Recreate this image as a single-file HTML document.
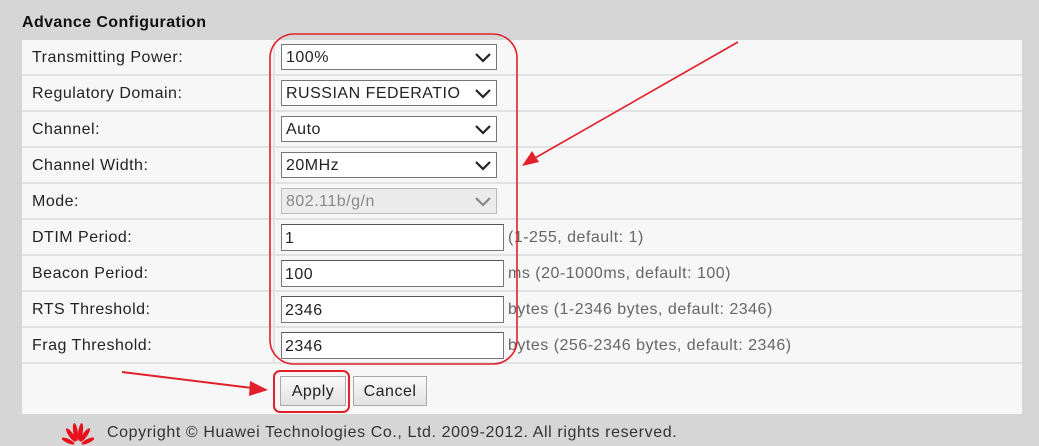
<!DOCTYPE html>
<html><head><style>
body{margin:0;width:1039px;height:446px;background:#d6d6d6;position:relative;overflow:hidden;font-family:"Liberation Sans",Arial,sans-serif;font-size:16px;letter-spacing:0.5px;color:#222}
.a{position:absolute}
.title{left:22px;top:14px;font-weight:bold;font-size:16px;letter-spacing:0.4px;color:#111}
.tbl{left:22px;top:40px;width:1000px;height:374px;background:#f7f7f7}
.row{position:absolute;left:0;width:1000px;height:34px;border-bottom:2px solid #e2e2e2}
.lab{position:absolute;left:10px;top:9px}
.sep{position:absolute;left:251px;top:0;width:2px;height:34px;background:#e2e2e2}
.sel{position:absolute;left:259px;top:4px;width:210px;height:24px;border:1px solid #777;background:#fff;line-height:26px;padding-left:4px}
.sel svg{position:absolute;right:5px;top:8px}
.dis{background:#ececec;border-color:#bbb;color:#888}
.inp{position:absolute;left:259px;top:4px;width:218px;height:25px;border:1px solid #777;border-top-color:#555;background:#fff;line-height:27px;padding-left:3px}
.hint{position:absolute;left:486px;top:9px;color:#666}
.btn{position:absolute;top:336px;height:28px;border:1px solid #aaa;background:linear-gradient(#fafafa,#e2e2e2);line-height:30px;text-align:center}
.foot{left:107px;top:424px;font-size:16px;letter-spacing:0.6px;color:#333}
</style></head><body>
<div class="a title">Advance Configuration</div>
<div class="a tbl">
 <div class="row" style="top:0"><span class="lab">Transmitting Power:</span><div class="sep"></div><div class="sel">100%<svg width="16" height="10"><path d="M1 1L8 8L15 1" stroke="#222" stroke-width="2.2" fill="none"/></svg></div></div>
 <div class="row" style="top:36px"><span class="lab">Regulatory Domain:</span><div class="sep"></div><div class="sel">RUSSIAN FEDERATIO<svg width="16" height="10"><path d="M1 1L8 8L15 1" stroke="#222" stroke-width="2.2" fill="none"/></svg></div></div>
 <div class="row" style="top:72px"><span class="lab">Channel:</span><div class="sep"></div><div class="sel">Auto<svg width="16" height="10"><path d="M1 1L8 8L15 1" stroke="#222" stroke-width="2.2" fill="none"/></svg></div></div>
 <div class="row" style="top:108px"><span class="lab">Channel Width:</span><div class="sep"></div><div class="sel">20MHz<svg width="16" height="10"><path d="M1 1L8 8L15 1" stroke="#222" stroke-width="2.2" fill="none"/></svg></div></div>
 <div class="row" style="top:144px"><span class="lab">Mode:</span><div class="sep"></div><div class="sel dis">802.11b/g/n<svg width="16" height="10"><path d="M1 1L8 8L15 1" stroke="#888" stroke-width="2.2" fill="none"/></svg></div></div>
 <div class="row" style="top:180px"><span class="lab">DTIM Period:</span><div class="sep"></div><div class="inp">1</div><span class="hint">(1-255, default: 1)</span></div>
 <div class="row" style="top:216px"><span class="lab">Beacon Period:</span><div class="sep"></div><div class="inp">100</div><span class="hint">ms (20-1000ms, default: 100)</span></div>
 <div class="row" style="top:252px"><span class="lab">RTS Threshold:</span><div class="sep"></div><div class="inp">2346</div><span class="hint">bytes (1-2346 bytes, default: 2346)</span></div>
 <div class="row" style="top:288px"><span class="lab">Frag Threshold:</span><div class="sep"></div><div class="inp">2346</div><span class="hint">bytes (256-2346 bytes, default: 2346)</span></div>
 <div class="btn" style="left:258px;width:64px">Apply</div>
 <div class="btn" style="left:331px;width:72px">Cancel</div>
</div>
<svg class="a" style="left:62px;top:422px" width="32" height="24" viewBox="0 0 32 24">
<g fill="#e8101a"><ellipse cx="13.5" cy="10" rx="2.3" ry="9" transform="rotate(-8 13.5 10)"/><ellipse cx="18.5" cy="10" rx="2.3" ry="9" transform="rotate(8 18.5 10)"/><ellipse cx="9" cy="13" rx="2.3" ry="8" transform="rotate(-35 9 13)"/><ellipse cx="23" cy="13" rx="2.3" ry="8" transform="rotate(35 23 13)"/><ellipse cx="6" cy="19" rx="2" ry="7" transform="rotate(-65 6 19)"/><ellipse cx="26" cy="19" rx="2" ry="7" transform="rotate(65 26 19)"/></g></svg>
<div class="a foot">Copyright © Huawei Technologies Co., Ltd. 2009-2012. All rights reserved.</div>
<svg class="a" style="left:0;top:0" width="1039" height="446">
<rect x="270" y="34" width="247" height="330" rx="24" fill="none" stroke="#e0202a" stroke-width="1.6"/>
<rect x="274" y="371" width="75" height="41" rx="6" fill="none" stroke="#e0202a" stroke-width="2"/>
<line x1="738" y1="42" x2="535" y2="158" stroke="#e0202a" stroke-width="1.6"/>
<path d="M522 166L532 151L539 162Z" fill="#e0202a"/>
<line x1="122" y1="372" x2="252" y2="388" stroke="#e0202a" stroke-width="2"/>
<path d="M268 390L250 381L249 396Z" fill="#e0202a"/>
</svg>
</body></html>
